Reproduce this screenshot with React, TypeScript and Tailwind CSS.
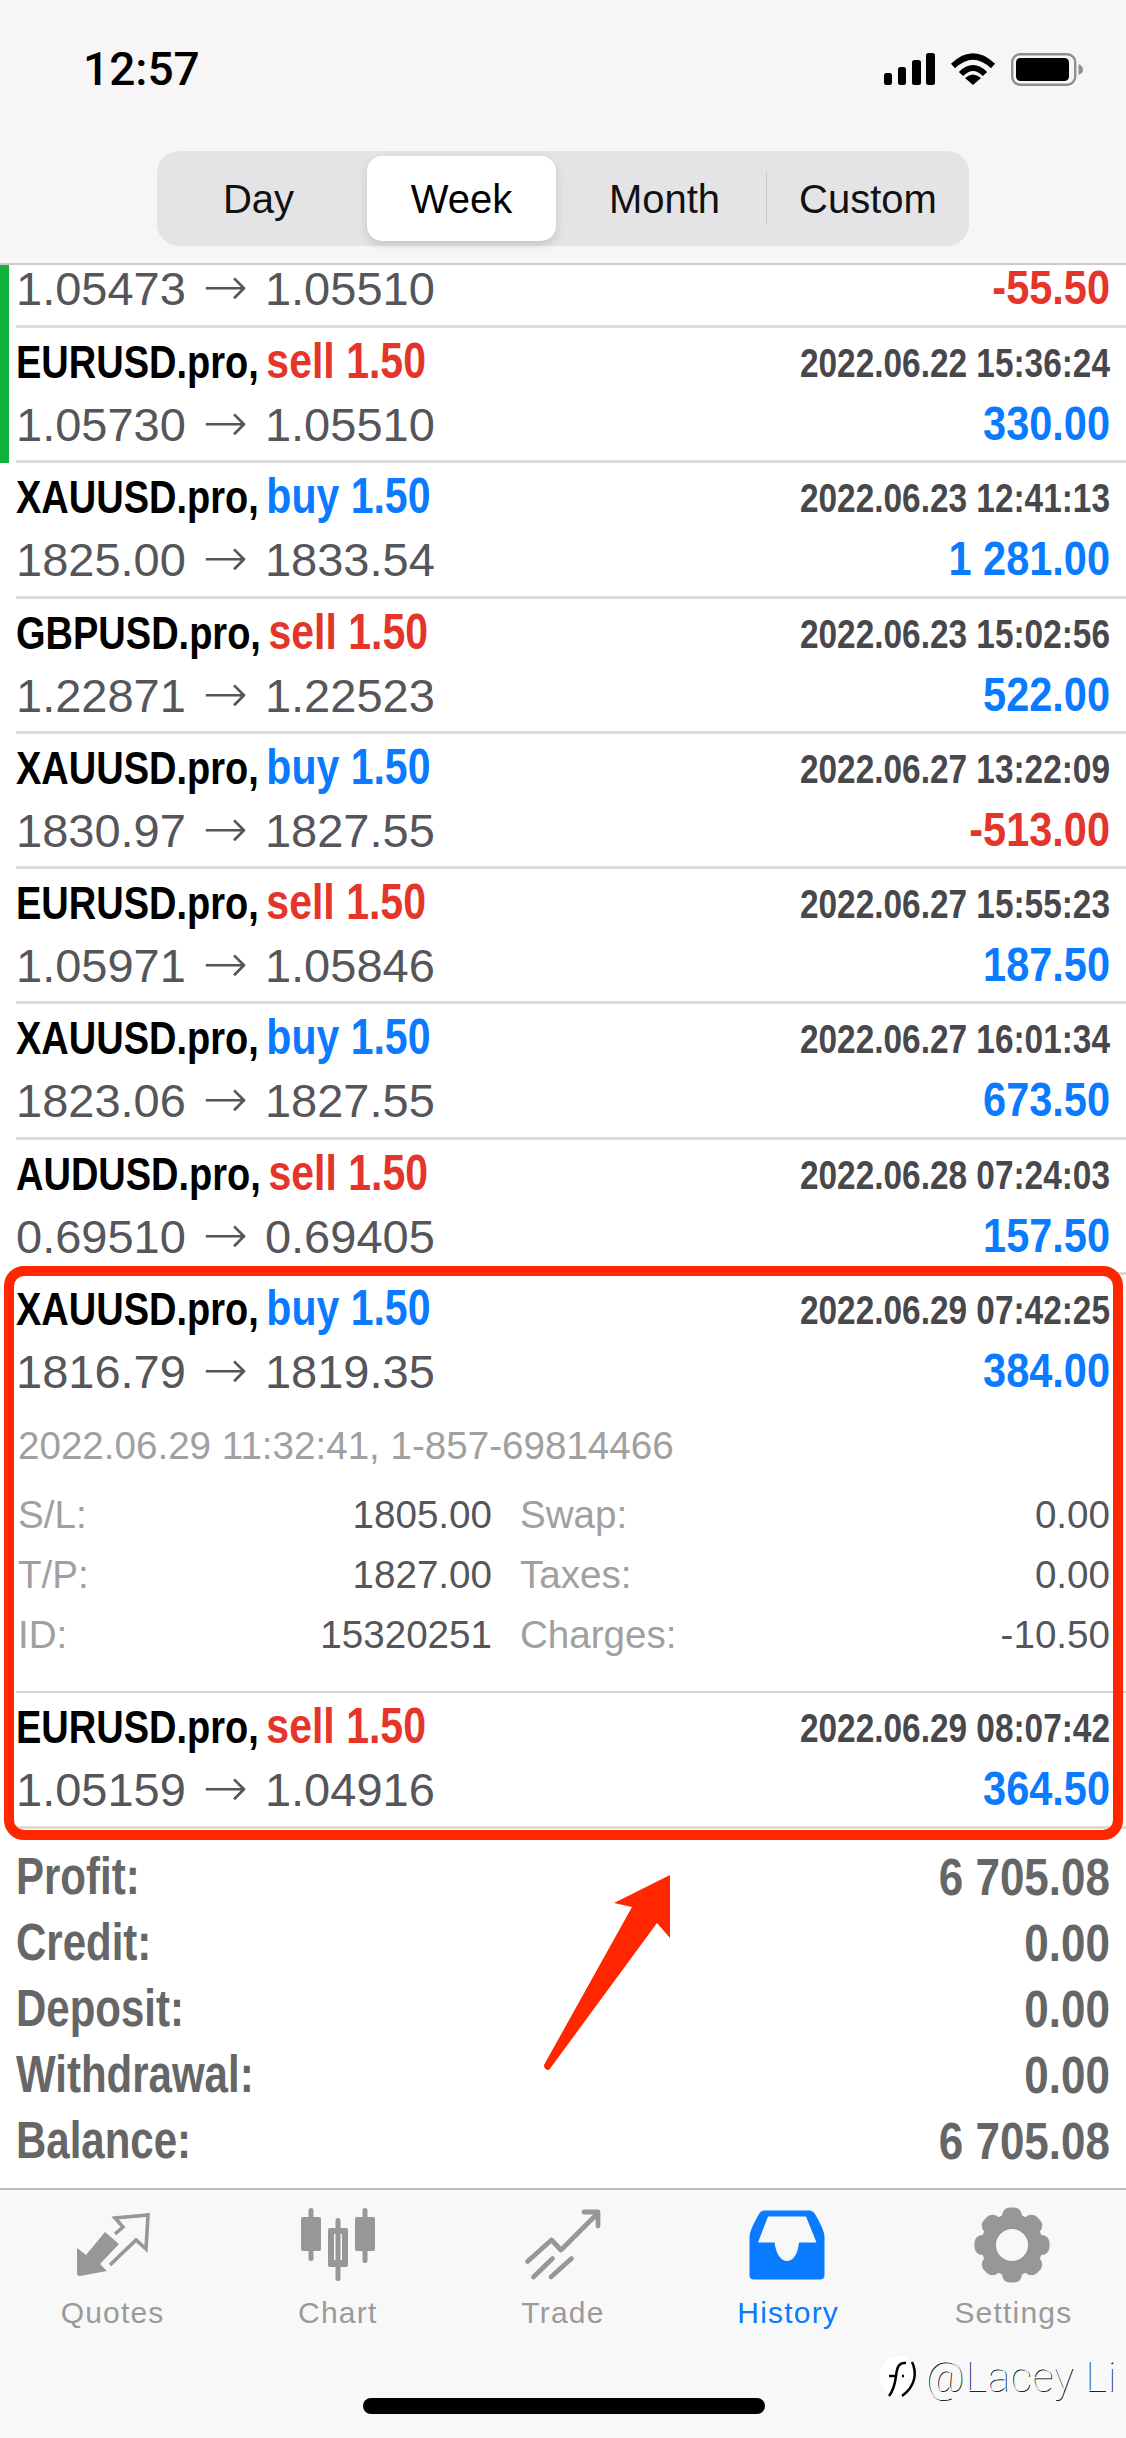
const deals = [
  { symbol: "EURUSD.pro", side: "sell", time: "2022.06.22 15:36:24", from: "1.05730", to: "1.05510", profit: "330.00", bar: true },
  { symbol: "XAUUSD.pro", side: "buy", time: "2022.06.23 12:41:13", from: "1825.00", to: "1833.54", profit: "1 281.00" },
  { symbol: "GBPUSD.pro", side: "sell", time: "2022.06.23 15:02:56", from: "1.22871", to: "1.22523", profit: "522.00" },
  { symbol: "XAUUSD.pro", side: "buy", time: "2022.06.27 13:22:09", from: "1830.97", to: "1827.55", profit: "-513.00" },
  { symbol: "EURUSD.pro", side: "sell", time: "2022.06.27 15:55:23", from: "1.05971", to: "1.05846", profit: "187.50" },
  { symbol: "XAUUSD.pro", side: "buy", time: "2022.06.27 16:01:34", from: "1823.06", to: "1827.55", profit: "673.50" },
  { symbol: "AUDUSD.pro", side: "sell", time: "2022.06.28 07:24:03", from: "0.69510", to: "0.69405", profit: "157.50" },
];

const totals = [
  ["Profit:", "6 705.08"],
  ["Credit:", "0.00"],
  ["Deposit:", "0.00"],
  ["Withdrawal:", "0.00"],
  ["Balance:", "6 705.08"],
];

const details = [
  ["S/L:", "1805.00", "Swap:", "0.00"],
  ["T/P:", "1827.00", "Taxes:", "0.00"],
  ["ID:", "15320251", "Charges:", "-10.50"],
];

const QuotesIcon = () => (
  <svg width="120" height="84" viewBox="0 0 120 84">
    <path d="M24 44 L33 51 L52 28 L66 40 L47 60 L54 67 L27 72 Q24 72 24 69 Z" fill="#979797" />
    <path
      d="M62 30 L70 23 L62 14 L95 11 L93 45 L83 36 L57 61"
      fill="none"
      stroke="#979797"
      strokeWidth="3.6"
    />
  </svg>
);

const ChartIcon = () => (
  <svg width="120" height="84" viewBox="0 0 120 84" fill="#979797">
    <rect x="30.5" y="4" width="5" height="53" rx="2.5" />
    <rect x="23" y="13" width="20" height="34" rx="2" />
    <rect x="84.5" y="4" width="5" height="55" rx="2.5" />
    <rect x="77" y="13" width="20" height="34" rx="2" />
    <rect x="57.5" y="14" width="5" height="63" rx="2.5" />
    <path fillRule="evenodd" d="M52 24 H68 Q70 24 70 26 V61 Q70 63 68 63 H52 Q50 63 50 61 V26 Q50 24 52 24 Z M56 30 V56 H64 V30 Z" />
  </svg>
);

const TradeIcon = () => (
  <svg width="120" height="84" viewBox="0 0 120 84" fill="none" stroke="#979797" strokeWidth="4.8" strokeLinecap="round" strokeLinejoin="round">
    <path d="M24.5 57.5 L48.5 36 L58 46 L94 10" />
    <path d="M81 8 H95 V22" />
    <path d="M30.5 73 L49.5 54.5 M48 73 L68.5 54.5" />
  </svg>
);

const HistoryIcon = () => (
  <svg width="120" height="84" viewBox="0 0 120 84">
    <path
      fillRule="evenodd"
      fill="#0a7aff"
      d="M36 6.5 H81 Q85 6.5 87 10 Q96.5 26 96.5 33 V71 Q96.5 75.5 92 75.5 H26 Q21.5 75.5 21.5 71 V33 Q21.5 26 31 10 Q33 6.5 36 6.5 Z M40 12.5 L30 38.5 H46.5 C48 50 53 57 59 57 C65 57 70 50 71 38.5 H88.5 L78 12.5 Z"
    />
  </svg>
);

const SettingsIcon = () => (
  <svg width="120" height="84" viewBox="0 0 120 84" fill="#979797">
    <circle cx="59" cy="41" r="31" />
    {[0, 45, 90, 135, 180, 225, 270, 315].map((deg) => (
      <rect key={deg} x="49" y="3.5" width="20" height="20" rx="8" transform={`rotate(${deg} 59 41)`} />
    ))}
    <circle cx="59" cy="41" r="16" fill="#f8f8f8" />
  </svg>
);

const tabs = [
  { label: "Quotes", icon: <QuotesIcon /> },
  { label: "Chart", icon: <ChartIcon /> },
  { label: "Trade", icon: <TradeIcon /> },
  { label: "History", icon: <HistoryIcon />, active: true },
  { label: "Settings", icon: <SettingsIcon /> },
];

const Price = ({ from, to }: { from: string; to: string }) => (
  <span className="text-[47px] leading-[65px] text-[#55555a]">
    {from}
    <span className="inline-block w-[79px] text-center font-['DejaVu_Sans',sans-serif] text-[54px] leading-none font-extralight">→</span>
    {to}
  </span>
);

const Profit = ({ value }: { value: string }) => (
  <span
    className={`block origin-[50%_78%] scale-y-[1.15] text-[41.5px] leading-[65px] font-bold ${
      value.startsWith("-") ? "text-[#e5352a]" : "text-[#0a7aff]"
    }`}
  >
    {value}
  </span>
);

const Title = ({ symbol, side, time }: { symbol: string; side: string; time: string }) => (
  <div className="flex justify-between items-baseline h-[50px]">
    <span className="block origin-[50%_78%] scale-y-[1.2] text-[38px] leading-[50px] font-bold text-black">
      {symbol},{" "}
      <span className={`-ml-[3px] text-[41px] ${side === "sell" ? "text-[#e5352a]" : "text-[#0a7aff]"}`}>{side} 1.50</span>
    </span>
    <span className="block origin-[50%_78%] scale-y-[1.2] text-[33.4px] leading-[50px] font-bold text-[#48484c]">
      {time}
    </span>
  </div>
);

const PriceLine = ({ from, to, profit }: { from: string; to: string; profit: string }) => (
  <div className="flex justify-between items-baseline mt-[3px] h-[65px]">
    <Price from={from} to={to} />
    <Profit value={profit} />
  </div>
);

export default function App() {
  return (
    <div className="relative w-[1126px] h-[2438px] overflow-hidden bg-white flex flex-col font-['Liberation_Sans',sans-serif]">
      {/* status bar + period switch */}
      <header className="h-[265px] shrink-0 bg-[#f7f5f5] border-b-2 border-[#cbcbcb]">
        <div className="flex items-center justify-between pl-[83px] pr-[43px] pt-[53px] h-[86px]">
          <span className="font-['Roboto',sans-serif] font-medium text-[46px] leading-[33px] text-black">12:57</span>
          <div className="flex items-center gap-[15px]">
            <svg width="51" height="33" viewBox="0 0 51 33" fill="#000">
              <rect x="0" y="20" width="8" height="12" rx="2.5" />
              <rect x="14" y="14" width="8" height="18" rx="2.5" />
              <rect x="28" y="7" width="9" height="25" rx="2.5" />
              <rect x="42" y="0" width="9" height="32" rx="2.5" />
            </svg>
            <svg width="46" height="33" viewBox="0 0 46 33">
              <path d="M3 13 Q23 -6 43 13" fill="none" stroke="#000" strokeWidth="6" />
              <path d="M11 21 Q23 9 35 21" fill="none" stroke="#000" strokeWidth="6" />
              <path d="M23 32 L15 25 Q23 18 31 25 Z" fill="#000" />
            </svg>
            <svg width="72" height="33" viewBox="0 0 72 33">
              <rect x="1.2" y="1.2" width="63" height="30.5" rx="8" fill="none" stroke="#8f8f8f" strokeWidth="2.4" />
              <rect x="5" y="5" width="53" height="23" rx="4.5" fill="#000" />
              <path d="M67.5 11 Q72 13 72 16.5 Q72 20 67.5 22 Z" fill="#8f8f8f" />
            </svg>
          </div>
        </div>
        <div className="flex w-[812px] h-[95px] mt-[65px] ml-[157px] rounded-[22px] bg-[#e4e4e7] text-[40px] text-[#111]">
          <div className="w-[203px] flex items-center justify-center">Day</div>
          <div className="w-[189px] flex items-center justify-center my-[5px] mx-[7px] rounded-[15px] bg-white text-black shadow-[0_4px_10px_rgba(0,0,0,0.14)]">
            Week
          </div>
          <div className="w-[203px] flex items-center justify-center">Month</div>
          <div className="w-px h-[53px] self-center bg-[#c4c4c6]" />
          <div className="w-[202px] flex items-center justify-center">Custom</div>
        </div>
      </header>

      {/* deals */}
      <div className="flex h-[63px] shrink-0">
        <div className="w-[9px] bg-[#10b23c]" />
        <div className="flex-1 ml-[7px] pr-4 border-b-[3px] border-[#dcdcdc]">
          <div className="flex justify-between items-baseline -mt-[9px] h-[65px]">
            <Price from="1.05473" to="1.05510" />
            <Profit value="-55.50" />
          </div>
        </div>
      </div>

      {deals.map((deal) => (
        <div key={deal.time} className="flex h-[135.3px] shrink-0">
          <div className={`w-[9px] ${deal.bar ? "bg-[#10b23c]" : ""}`} />
          <div className="flex-1 ml-[7px] pr-4 pt-[11px] border-b-[3px] border-[#dcdcdc]">
            <Title symbol={deal.symbol} side={deal.side} time={deal.time} />
            <PriceLine from={deal.from} to={deal.to} profit={deal.profit} />
          </div>
        </div>
      ))}

      {/* opened deal */}
      <div className="h-[418px] shrink-0 ml-4 pr-4 pt-[11px] border-b-2 border-[#d4d4d4]">
        <Title symbol="XAUUSD.pro" side="buy" time="2022.06.29 07:42:25" />
        <PriceLine from="1816.79" to="1819.35" profit="384.00" />
        <div className="mt-[12px] pl-[2px] text-[38.6px] leading-[60px]">
          <div className="text-[#a0a0a0]">2022.06.29 11:32:41, 1-857-69814466</div>
          <div className="grid grid-cols-[474px_590px] gap-x-[28px] mt-[9px]">
            {details.map(([a, b, c, d]) => (
              <div key={a} className="contents">
                <div className="flex justify-between">
                  <span className="text-[#a0a0a0]">{a}</span>
                  <span className="text-[#55555a]">{b}</span>
                </div>
                <div className="flex justify-between">
                  <span className="text-[#a0a0a0]">{c}</span>
                  <span className="text-[#55555a]">{d}</span>
                </div>
              </div>
            ))}
          </div>
        </div>
      </div>
      <div className="h-[136px] shrink-0 ml-4 pr-4 pt-[11px] border-b-[3px] border-[#dcdcdc]">
        <Title symbol="EURUSD.pro" side="sell" time="2022.06.29 08:07:42" />
        <PriceLine from="1.05159" to="1.04916" profit="364.50" />
      </div>

      {/* totals */}
      <div className="flex-1 pl-4 pr-4 pt-[21px]">
        {totals.map(([label, value]) => (
          <div key={label} className="flex justify-between items-baseline h-[66px] text-[#666]">
            <span className="block origin-[50%_78%] scale-y-[1.24] text-[42px] leading-[60px] font-bold">{label}</span>
            <span className="block origin-[50%_78%] scale-y-[1.18] text-[44px] leading-[60px] font-bold">{value}</span>
          </div>
        ))}
      </div>

      {/* tab bar */}
      <nav className="h-[250px] shrink-0 bg-[#f8f8f8] border-t-2 border-[#bdbdbd] pt-[14px] relative">
        <div className="grid grid-cols-5">
          {tabs.map((tab) => (
            <div
              key={tab.label}
              className={`flex flex-col items-center text-[30px] leading-[34px] tracking-[1.2px] ${
                tab.active ? "text-[#0a7aff]" : "text-[#9a9a9a]"
              }`}
            >
              {tab.icon}
              <span className="mt-[8px]">{tab.label}</span>
            </div>
          ))}
        </div>
        <div className="absolute bottom-[24px] left-[363px] w-[402px] h-[16px] rounded-full bg-black" />
      </nav>

      {/* screenshot annotations */}
      <div className="absolute left-[4px] top-[1266px] w-[1119px] h-[574px] rounded-[20px] border-[10px] border-[#ff2600]" />
      <svg className="absolute left-[540px] top-[1870px]" width="135" height="205" viewBox="0 0 135 205">
        <path d="M130 5 L74 33 L92 37 L4 195 Q4 200 9 200 L117 53 L130 68 Z" fill="#ff2600" />
      </svg>

      {/* watermark */}
      <div className="absolute left-[880px] top-[2352px] flex items-center">
        <svg width="40" height="50" viewBox="0 0 40 50">
          <path d="M18 4 C30 3 37 12 36 24 C35 34 27 42 16 44 C5 44 0 34 0 24 C0 13 7 5 18 4 Z" fill="#fff" />
          <path d="M26 11 C19 10 17 15 16 24 C15 32 13 39 9 44" fill="none" stroke="#000" strokeWidth="2.5" />
          <path d="M9 24 H15 M22 24 H24" stroke="#000" strokeWidth="2.5" />
          <path d="M32 10 C37 20 36 34 22 44" fill="none" stroke="#000" strokeWidth="2.5" />
        </svg>
        <span className="ml-[5px] font-['Roboto',sans-serif] font-thin text-[42px] leading-[50px] tracking-[0.6px] text-white [text-shadow:1px_1px_0_#222]">
          @Lacey Li
        </span>
      </div>
    </div>
  );
}
